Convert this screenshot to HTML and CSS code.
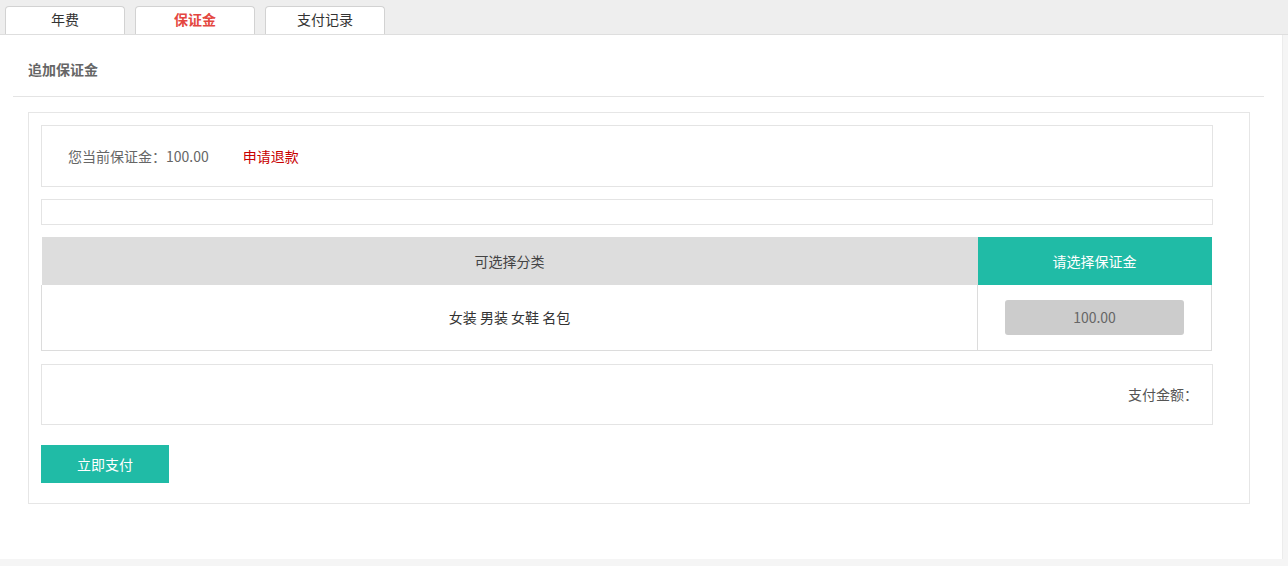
FILE: index.html
```html
<!DOCTYPE html>
<html lang="zh-CN">
<head>
<meta charset="utf-8">
<title>保证金</title>
<link rel="stylesheet" href="styles.css">
</head>
<body>
<div class="tabbar">
  <div class="tab">年费</div>
  <div class="tab active">保证金</div>
  <div class="tab">支付记录</div>
</div>
<div class="main">
  <div class="title">追加保证金</div>
  <div class="panel">
    <div class="box info">
      <span class="label">您当前保证金：100.00</span>
      <a class="refund">申请退款</a>
    </div>
    <div class="box empty"></div>
    <table class="choose">
      <thead>
        <tr><th class="cat-h">可选择分类</th><th class="amt-h">请选择保证金</th></tr>
      </thead>
      <tbody>
        <tr><td class="cat">女装 男装 女鞋 名包</td><td class="amt"><span class="amt-btn">100.00</span></td></tr>
      </tbody>
    </table>
    <div class="box total">支付金额：</div>
    <div class="pay">立即支付</div>
  </div>
</div>
</body>
</html>
```
FILE: styles.css
```css
* { box-sizing: border-box; }
html, body { margin: 0; padding: 0; }
body {
  background: #f5f5f5;
  font-family: "Noto Sans CJK SC", "Liberation Sans", sans-serif;
  font-size: 14px;
  color: #333;
  height: 566px;
  overflow: hidden;
}
.tabbar {
  background: #eeeeee;
  height: 35px;
  border-bottom: 1px solid #dedede;
  display: flex;
  align-items: flex-end;
  gap: 10px;
  padding-left: 5px;
}
.tab {
  width: 120px;
  height: 28px;
  background: #fff;
  border: 1px solid #d2d2d2;
  border-bottom: none;
  border-radius: 4px 4px 0 0;
  text-align: center;
  line-height: 24px;
  color: #333;
}
.tab.active {
  color: #e4473f;
  font-weight: bold;
}
.main {
  background: #fff;
  width: 1283px;
  height: 524px;
  border-right: 1px solid #ececec;
  padding-top: 0;
}
.title {
  margin: 0 18px 0 13px;
  height: 62px;
  border-bottom: 1px solid #e4e4e4;
  padding-left: 15px;
  line-height: 68px;
  font-weight: bold;
  color: #666;
}
.panel {
  margin: 15px 0 0 28px;
  width: 1222px;
  border: 1px solid #e6e6e6;
  padding: 12px 12px 20px 12px;
}
.box {
  width: 1172px;
  border: 1px solid #e4e4e4;
}
.info {
  height: 62px;
  display: flex;
  align-items: center;
  padding-left: 26px;
  color: #666;
}
.refund {
  margin-left: 34px;
  color: #c80000;
}
.empty {
  height: 26px;
  margin-top: 12px;
}
.choose {
  margin-top: 12px;
  width: 1171px;
  border-collapse: collapse;
}
.choose th {
  height: 48px;
  font-weight: normal;
  padding: 0;
}
.cat-h {
  background: #dddddd;
  color: #444;
}
.amt-h {
  background: #20bba6;
  color: #fff;
  width: 234px;
}
.choose td {
  height: 65px;
  border: 1px solid #dcdcdc;
  border-top: none;
  text-align: center;
  padding: 0;
}
.cat { color: #333; }
.amt-btn {
  display: inline-block;
  width: 179px;
  height: 35px;
  line-height: 35px;
  background: #cccccc;
  border-radius: 3px;
  color: #666;
}
.total {
  margin-top: 13px;
  height: 61px;
  display: flex;
  align-items: center;
  justify-content: flex-end;
  padding-right: 14px;
  color: #555;
}
.pay {
  margin-top: 20px;
  width: 128px;
  height: 38px;
  line-height: 38px;
  background: #20bba6;
  color: #fff;
  text-align: center;
}
```
